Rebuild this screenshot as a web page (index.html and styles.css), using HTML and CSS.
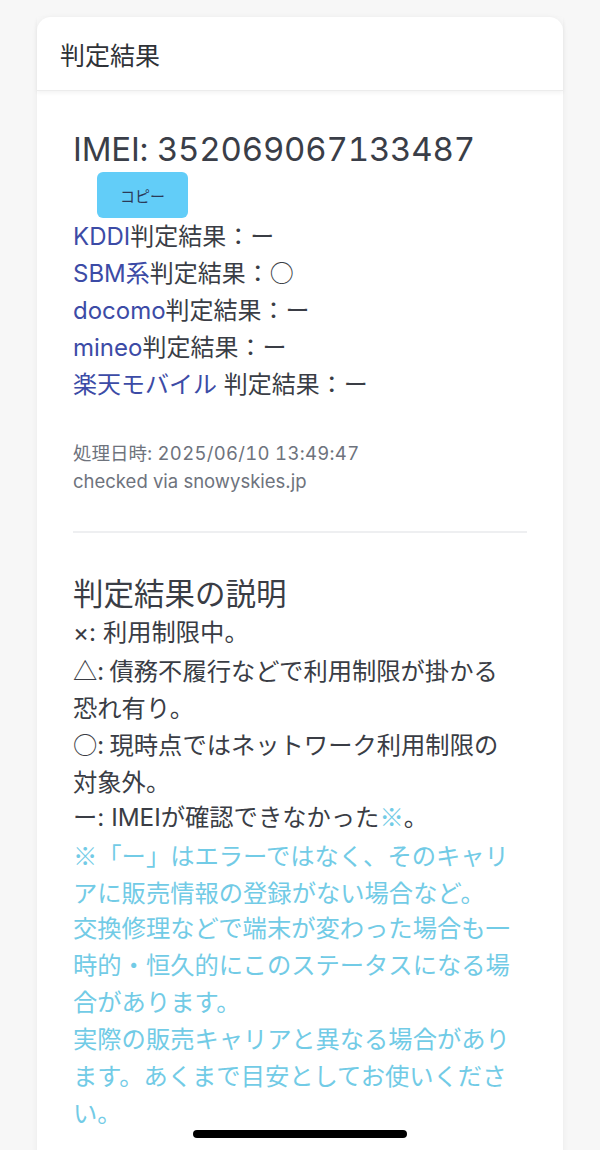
FILE: index.html
```html
<!DOCTYPE html>
<html lang="ja">
<head>
<meta charset="utf-8">
<title>判定結果</title>
<link rel="stylesheet" href="styles.css">
</head>
<body>
<div class="page">
  <section class="card">
    <header class="card-header">判定結果</header>
    <div class="card-body">
      <h2 class="imei">IMEI: 352069067133487</h2>
      <button class="copy-btn" type="button">コピー</button>
      <ul class="results">
        <li><span class="carrier">KDDI</span>判定結果：ー</li>
        <li><span class="carrier">SBM系</span><span class="cjk">判定結果：○</span></li>
        <li><span class="carrier">docomo</span>判定結果：ー</li>
        <li><span class="carrier">mineo</span>判定結果：ー</li>
        <li><span class="carrier">楽天モバイル</span> 判定結果：ー</li>
      </ul>
      <div class="meta">
        <div>処理日時: <span class="num">2025/06/10 13:49:47</span></div>
        <div>checked via snowyskies.jp</div>
      </div>
      <hr class="divider">
      <h3 class="explain-title">判定結果の説明</h3>
      <div class="explain">
        <p>×: 利用制限中。</p>
        <p class="cjk">△: 債務不履行などで利用制限が掛かる恐れ有り。</p>
        <p class="cjk">○: 現時点ではネットワーク利用制限の対象外。</p>
        <p>ー: IMEIが確認できなかった<span class="note-mark cjk">※</span>。</p>
        <p class="note cjk">※「ー」はエラーではなく、そのキャリアに販売情報の登録がない場合など。</p>
        <p class="note">交換修理などで端末が変わった場合も一時的・恒久的にこのステータスになる場合があります。</p>
        <p class="note">実際の販売キャリアと異なる場合があります。あくまで目安としてお使いください。</p>
      </div>
    </div>
  </section>
</div>
<div class="home-indicator"></div>
</body>
</html>
```
FILE: styles.css
```css
html, body {
  margin: 0;
  padding: 0;
}
body {
  background: #f7f7f7;
  font-family: "Inter", "Noto Sans CJK JP", sans-serif;
  color: #383c45;
  height: 1150px;
  overflow: hidden;
}
.cjk {
  font-family: "Noto Sans CJK JP", sans-serif;
}
.page {
  padding: 17px 37px 0 37px;
}
.card {
  background: #ffffff;
  border-radius: 14px;
  box-shadow: 0 1px 6px rgba(0, 0, 0, 0.06);
  min-height: 1200px;
}
.card-header {
  height: 73px;
  display: flex;
  align-items: center;
  padding-left: 23px;
  font-size: 25px;
  color: #2f3237;
  border-bottom: 1px solid #ececec;
  box-shadow: 0 2px 4px rgba(0, 0, 0, 0.05);
}
.card-body {
  padding: 38px 36px 0 36px;
}
.imei {
  margin: 0;
  font-weight: normal;
  font-size: 33px;
  line-height: 40px;
  color: #3a3e48;
  font-variant-numeric: tabular-nums;
  letter-spacing: -0.2px;
}
.copy-btn {
  display: block;
  margin: 3px 0 0 24px;
  width: 91px;
  height: 46px;
  border: none;
  border-radius: 6px;
  background: #62cdf8;
  color: #2b3a58;
  font-family: "Noto Sans CJK JP", sans-serif;
  font-size: 15px;
  padding: 0;
}
.results {
  list-style: none;
  margin: 0;
  padding: 0;
  font-size: 24px;
  line-height: 37px;
  color: #3a3d45;
}
.results .cjk {
  line-height: 1;
}
.carrier {
  color: #3c4ba6;
}
.meta {
  margin-top: 36px;
  font-size: 18.5px;
  line-height: 28px;
  color: #6e737d;
}
.num {
  font-variant-numeric: tabular-nums;
  letter-spacing: 0.3px;
}
.divider {
  border: none;
  border-top: 2px solid #eeeff1;
  margin: 36px 0 0 0;
}
.explain-title {
  margin: 40px 0 0 0;
  font-weight: normal;
  font-size: 30.5px;
  line-height: 41px;
  color: #3a3d45;
}
.explain {
  font-size: 24.3px;
  line-height: 37px;
  color: #3a3d45;
  margin-right: 10px;
}
.explain p {
  margin: 0;
}
.note-mark {
  line-height: 1;
}
.note, .note-mark {
  color: #72cbe6;
}
.home-indicator {
  position: fixed;
  left: 193px;
  top: 1130px;
  width: 214px;
  height: 8px;
  border-radius: 4px;
  background: #000;
}
```
